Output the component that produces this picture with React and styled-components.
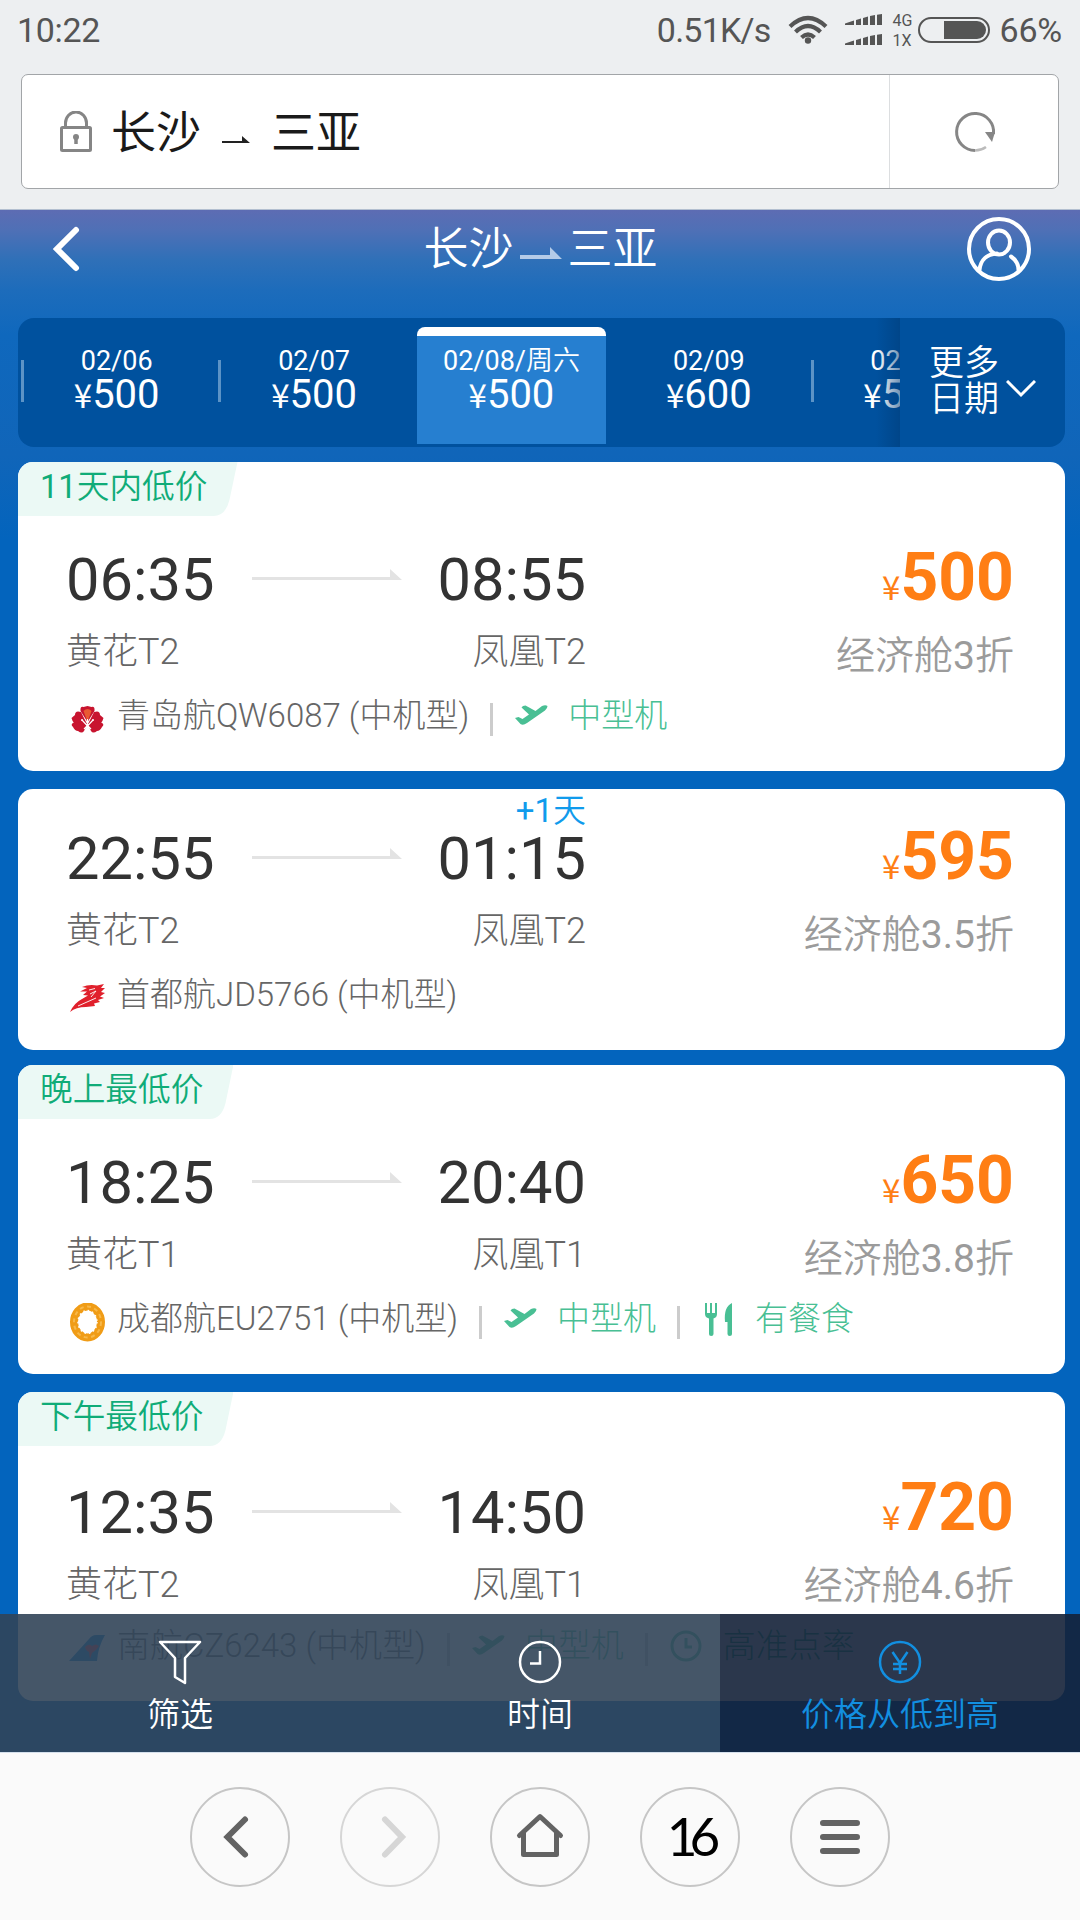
import styled, { createGlobalStyle, css } from 'styled-components';

const GlobalStyle = createGlobalStyle`
  * {
    box-sizing: border-box;
  }

  body {
    margin: 0;
    background-color: #fafafa;
    font-family: Roboto, 'Noto Sans CJK SC', sans-serif;
  }
`;

const Screen = styled.div`
  width: 1080px;
  height: 1920px;
  display: flex;
  flex-direction: column;
  overflow: hidden;
`;

/* status bar + address bar */

const BrowserTop = styled.div`
  height: 210px;
  background-color: #edeff1;
  border-bottom: 1px solid #b3bfd0;
`;

const StatusBar = styled.div`
  height: 74px;
  padding: 10px 18px 0 17px;
  display: flex;
  align-items: flex-start;
  color: #555;
  font-size: 34px;
  line-height: 40px;
`;

const Clock = styled.span`
  flex: 1;
  letter-spacing: -0.3px;
`;

const Speed = styled.span`
  letter-spacing: -0.8px;
  margin-right: 18px;
`;

const Percent = styled.span`
  letter-spacing: -0.2px;
`;

const NetTypes = styled.div`
  width: 26px;
  margin: 1px 0 0 10px;
  font-size: 16px;
  line-height: 20px;
`;

const StatusIcon = styled.svg`
  display: block;
  flex: none;
  margin-right: ${(props) => props.$gap || 0}px;
`;

const AddressBar = styled.div`
  width: 1038px;
  height: 115px;
  margin-left: 21px;
  border: 1px solid #a2a5a8;
  border-radius: 7px;
  background-color: #fff;
  display: flex;
`;

const AddressText = styled.div`
  flex: 1;
  display: flex;
  align-items: center;
  padding-left: 38px;
  color: #1a1a1a;
  font-size: 45px;
  line-height: 60px;

  svg {
    display: block;
  }
`;

const Place = styled.span`
  margin: 4px 0 0 ${(props) => props.$left || 0}px;
`;

const ReloadButton = styled.button`
  width: 169px;
  padding: 0 0 0 2px;
  border: 0;
  border-left: 1px solid #dcdee0;
  background: none;
  display: flex;
  align-items: center;
  justify-content: center;
`;

/* flight page */

const Page = styled.div`
  height: 1542px;
  position: relative;
  background: linear-gradient(
    to bottom,
    #5d6cb3 0,
    #4f70b6 20px,
    #2f70b8 50px,
    #1d6cbb 80px,
    #0f68bd 125px,
    #1065b9 245px,
    #0364bd 330px,
    #0364bd 100%
  );
`;

const Header = styled.header`
  height: 108px;
  padding: 7px 49px 37px 50px;
  display: flex;
  align-items: center;
  justify-content: space-between;
`;

const Title = styled.h1`
  margin: 2px 0 0 32px;
  display: flex;
  align-items: center;
  color: #fff;
  font-size: 45px;
  line-height: 60px;
  font-weight: 350;
`;

const IconButton = styled.button`
  padding: 0;
  border: 0;
  background: none;
  display: flex;
`;

const DateBar = styled.div`
  width: 1047px;
  height: 129px;
  margin: 0 0 15px 18px;
  border-radius: 16px;
  background-color: #00519e;
  display: flex;
  overflow: hidden;
  color: #fff;
`;

const DateScroll = styled.div`
  width: 882px;
  height: 129px;
  display: flex;
  overflow: hidden;
  position: relative;

  &::after {
    content: '';
    position: absolute;
    right: 0;
    top: 0;
    width: 24px;
    height: 129px;
    background: linear-gradient(to right, rgba(0, 60, 120, 0), rgba(0, 60, 120, 0.55));
  }
`;

const DateCell = styled.div`
  flex: none;
  width: 197.4px;
  height: 129px;
  padding: 9px 4px 3px;
  position: relative;

  ${(props) =>
    props.$divider &&
    css`
      &::before {
        content: '';
        position: absolute;
        left: 3px;
        top: 42px;
        width: 3px;
        height: 42px;
        background-color: #5c93c6;
      }
    `}
`;

const DateInner = styled.div`
  height: 117px;
  padding-top: 11px;
  border-top: 9px solid ${(props) => (props.$active ? '#fff' : 'transparent')};
  border-radius: 8px 8px 0 0;
  background-color: ${(props) => (props.$active ? '#267fd0' : 'transparent')};
  text-align: center;
  white-space: nowrap;
`;

const DateLabel = styled.div`
  font-size: 27px;
  line-height: 28px;
`;

const DatePrice = styled.div`
  font-size: 40px;
  line-height: 40px;
`;

const Thin = styled.span`
  font-weight: 350;
`;

const Yuan = styled.span`
  font-family: 'Noto Sans CJK SC', sans-serif;
  font-size: ${(props) => props.$size}px;
  font-weight: 400;
  line-height: 1;
`;

const MoreDates = styled.button`
  flex: 1;
  padding: 0 0 1px 29px;
  border: 0;
  background: none;
  color: #fff;
  font: 350 35px/36px Roboto, 'Noto Sans CJK SC', sans-serif;
  display: flex;
  align-items: center;
  gap: 5px;

  span {
    width: 72px;
    text-align: left;
  }

  svg {
    margin-top: 14px;
  }
`;

const Card = styled.article`
  width: 1047px;
  height: ${(props) => (props.$tagged ? 309 : 261)}px;
  margin: 0 0 ${(props) => props.$gap}px 18px;
  border-radius: 15px;
  background-color: #fff;
  overflow: hidden;
`;

const Tag = styled.div`
  position: relative;
  width: max-content;
  height: 54px;
  padding: 0 30px 0 22px;
  color: #10ac78;
  font-size: 32.7px;
  line-height: 51px;
  z-index: 0;

  svg {
    position: absolute;
    inset: 0;
    z-index: -1;
  }
`;

const Body = styled.div`
  padding: ${(props) => (props.$tagged ? 34 : 40)}px 51px 0 48px;
  display: flex;
  justify-content: space-between;
`;

const Schedule = styled.div`
  width: 520px;
  padding-top: ${(props) => props.$shift || 0}px;
`;

const Row = styled.div`
  display: flex;
  justify-content: space-between;
  align-items: center;
`;

const Time = styled.span`
  position: relative;
  color: #333;
  font-size: 59.6px;
  line-height: 60px;
`;

const NextDay = styled.span`
  position: absolute;
  right: 0;
  top: -38px;
  color: #109bec;
  font-size: 33px;
  font-weight: 400;
  line-height: 40px;
  white-space: nowrap;
`;

const Airports = styled(Row)`
  margin-top: 22px;
  color: #666;
  font-size: 36px;
  font-weight: 300;
  line-height: 40px;
`;

const Fare = styled.div`
  text-align: right;
`;

const Price = styled.div`
  margin-top: -5px;
  color: #ff7e14;
  font-size: 66px;
  font-weight: 700;
  line-height: 66px;
`;

const Discount = styled.div`
  margin-top: 25px;
  color: #9b9b9b;
  font-size: 39px;
  line-height: 40px;
`;

const Airline = styled.div`
  height: 40px;
  margin-top: 20px;
  padding-left: 51px;
  display: flex;
  color: #666;
  font-size: 33px;
  font-weight: 300;
  line-height: 40px;
  white-space: nowrap;

  > svg {
    flex: none;
    margin: 4px 11px 0 0;
  }
`;

const Feature = styled.span`
  display: flex;
  margin-left: 21px;
  color: #49bf94;

  &::before {
    content: '';
    width: 3px;
    height: 33px;
    margin: 7px 21px 0 0;
    background-color: #ccc;
  }

  svg {
    margin: 3px 20px 0 0;
  }
`;

/* floating sort tabs */

const SortBar = styled.div`
  position: absolute;
  left: 0;
  right: 0;
  bottom: 0;
  height: 138px;
  display: flex;
`;

const SortTab = styled.button`
  flex: 1;
  padding: 26px 0 0;
  border: 0;
  background-color: ${(props) =>
    props.$active ? 'rgba(20, 33, 56, 0.9)' : 'rgba(49, 68, 88, 0.9)'};
  color: ${(props) => (props.$active ? '#128fe0' : '#fff')};
  display: flex;
  flex-direction: column;
  align-items: center;
  gap: 9px;
  font: 350 33px/40px Roboto, 'Noto Sans CJK SC', sans-serif;
`;

/* browser toolbar */

const Toolbar = styled.nav`
  height: 168px;
  border-top: 1px solid #d5e0ec;
  background-color: #fafafa;
  padding-top: 34px;
  display: flex;
  justify-content: center;
  gap: 50px;
`;

const ToolButton = styled.button`
  width: 100px;
  height: 100px;
  padding: 0;
  border: 2px solid ${(props) => (props.$disabled ? '#d6d6d6' : '#c6c6c6')};
  border-radius: 50%;
  background: none;
  display: flex;
  align-items: center;
  justify-content: center;
  color: ${(props) => (props.$disabled ? '#d6d6d6' : '#636363')};

  svg {
    flex: none;
  }
`;

const TabCount = styled.span`
  color: #000;
  font-family: Lato, sans-serif;
  font-size: 53px;
  line-height: 60px;
  letter-spacing: -8px;
  margin: 0 1px 3px 0;
`;

const HalfArrow = ({ width, height, margin, fill, thickness, head }) => (
  <svg width={width} height={height} fill={fill} style={{ margin }}>
    <path
      d={`M0 ${height - thickness}H${width - head}V0L${width} ${height}H0z`}
    />
  </svg>
);

const Wifi = () => (
  <StatusIcon width="40" height="40" $gap={17} fill="none" stroke="#555" strokeWidth="4.200">
    <path d="M2 16.500Q20 -0.500 38 16.500M7.500 22Q20 10 32.500 22M13.500 27.500Q20 21.500 26.500 27.500" />
    <circle cx="20" cy="30.500" r="3.200" fill="#555" stroke="none" />
  </StatusIcon>
);

const Signal = () => (
  <StatusIcon width="37" height="40" fill="#555">
    {[4, 24].map((y) => (
      <path
        key={y}
        transform={`translate(0 ${y})`}
        d="M0 11V9.500L9 6.500V11zM11 11V6L16 4.500V11zM18 11V4L23 2.500V11zM25 11V2L30 1V11zM32 11V.700L37 0V11z"
      />
    ))}
  </StatusIcon>
);

const Battery = () => (
  <StatusIcon width="72" height="40" $gap={9}>
    <rect x="1" y="8" width="70" height="24" rx="12" fill="none" stroke="#555" strokeWidth="2" />
    <path d="M26 11H59A9 9 0 0 1 59 29H26z" fill="#555" />
  </StatusIcon>
);

const Lock = () => (
  <svg width="32" height="42" fill="none" stroke="#858585" strokeWidth="3">
    <rect x="1.500" y="16.500" width="29" height="23" rx="1" />
    <path d="M5.500 16V12A10.500 11 0 0 1 26.500 12V16" />
    <circle cx="16" cy="26" r="3" fill="#858585" stroke="none" />
    <path d="M16 26V33" strokeWidth="3.500" />
  </svg>
);

const Reload = () => (
  <svg width="44" height="44" fill="none" stroke="#868686" strokeWidth="3">
    <path d="M40.500 24A18.500 18.500 0 1 0 22 40.500" />
    <path d="M22 40.500Q28 40.500 33 37" stroke="#bbb" strokeWidth="2.500" />
    <path d="M32 22H42L39 32z" fill="#868686" stroke="none" />
  </svg>
);

const User = () => (
  <svg width="64" height="64" fill="none" stroke="#fff" strokeWidth="4">
    <circle cx="32" cy="32" r="30" />
    <ellipse cx="32" cy="25.500" rx="11" ry="12" />
    <path d="M12.500 53C13.500 43 20 37 30 36.500M44 39.500C49 43 51.500 48 51.500 53" strokeLinecap="round" />
  </svg>
);

const Plane = () => (
  <svg width="34" height="34" viewBox="0 0 34 34" fill="currentColor">
    <path d="M1 19L4.500 18L8.500 20L15 15.500L7.500 8.500Q8.500 6.500 11.500 6.500L21.500 12L28 7Q31.500 5.500 33.500 7Q33.500 9.500 31 11.500L13 24Q9 27 6.500 25Z" />
  </svg>
);

const Meal = () => (
  <svg width="34" height="34" viewBox="0 0 34 34" fill="currentColor">
    <path d="M4 1H6V11H9V1H11V11H14V1H16V12Q16 15.500 12.500 16.500V32Q12.500 34 10.200 34T8 32V16.500Q4 15.500 4 12z" />
    <path d="M31 1V32Q31 34 28.800 34T26.500 32V20H24Q22.500 5 31 1z" />
  </svg>
);

const Punctual = () => (
  <svg width="34" height="34" viewBox="0 0 34 34" fill="none" stroke="currentColor" strokeWidth="3">
    <circle cx="17" cy="17" r="14" />
    <path d="M17 9V18H23" />
  </svg>
);

const logos = {
  qingdao: (
    <svg width="37" height="36" viewBox="0 0 37 36">
      <g fill="#c8142f">
        <path d="M18.500 22L11.500 11Q11 6 14.500 7L18.500 6L22.500 7Q26 6 25.500 11Z" />
        <path d="M18 24L12 12Q6 10 6 15L2.500 18Q4 24 9 25Z" />
        <path d="M19 24L25 12Q31 10 31 15L34.500 18Q33 24 28 25Z" />
        <path d="M17.500 23L6 22Q.500 24 4 27Q6 31 9 31Q13 34 15 31L18 25Z" />
        <path d="M19.500 23L31 22Q36.500 24 33 27Q31 31 28 31Q24 34 22 31L19 25Z" />
      </g>
      <path d="M18.500 22L14.500 11Q18.500 7 22.500 11Z" fill="#e85a32" />
      <path d="M18.500 19V26M18.500 26L13 20M18.500 26L24 20M18 26L15 29M19 26L22 29" stroke="#fff" strokeWidth="1.200" fill="none" />
      <circle cx="13" cy="20" r="1" fill="#fff" />
      <circle cx="24" cy="20" r="1" fill="#fff" />
    </svg>
  ),
  capital: (
    <svg width="37" height="36" viewBox="0 0 37 36">
      <path
        d="M1 33Q5 24 13 20L19 16.500L14 16L18 12.500L11 12.500L18 9L13 8Q20 5 28 6.500L35 5L32 9L36 9L32 13L36 14L31 17.500L35 19L29 21L31 23L25 24.500L26 27L17 28Q7 28 1 33z"
        fill="#e0202c"
      />
      <path d="M9 27L27 19M20 11L26 9.500M21 15L27 12L22 18" stroke="#fff" strokeWidth="0.900" fill="none" />
    </svg>
  ),
  chengdu: (
    <svg width="37" height="40" viewBox="0 0 37 40">
      <ellipse cx="18.500" cy="19" rx="13.500" ry="15.500" fill="none" stroke="#f09c16" strokeWidth="8" />
      <ellipse cx="18.500" cy="19" rx="13.500" ry="15.500" fill="none" stroke="#f7b84a" strokeWidth="2" strokeDasharray="4 3.500" />
      <ellipse cx="18.500" cy="19" rx="9.500" ry="11.500" fill="none" stroke="#fff" strokeWidth="1.500" strokeDasharray="1.500 3" />
    </svg>
  ),
  southern: (
    <svg width="37" height="36" viewBox="0 0 37 36">
      <path d="M0 31L20 9Q23 5 27 5H36Q29 17 28 31z" fill="#0a86d8" />
      <path d="M16 17Q20 13 23 16Q27 13 30 16Q27 21 23 23L21 29L20 22Q17 21 16 17z" fill="#e83b4a" />
    </svg>
  ),
};

const features = {
  plane: <Plane />,
  meal: <Meal />,
  punctual: <Punctual />,
};

const dates = [
  { label: '02/06', price: 500, divider: true },
  { label: '02/07', price: 500, divider: true },
  { label: '02/08/', weekday: '周六', price: 500, active: true },
  { label: '02/09', price: 600 },
  { label: '02/10', price: 500, divider: true },
];

const flights = [
  {
    tag: ['11', '天内低价'],
    depart: '06:35',
    arrive: '08:55',
    from: '黄花T2',
    to: '凤凰T2',
    price: 500,
    rate: '3',
    logo: 'qingdao',
    airline: '青岛航QW6087 (中机型)',
    features: [{ icon: 'plane', text: '中型机' }],
    gap: 18,
  },
  {
    depart: '22:55',
    arrive: '01:15',
    nextDay: ['+1', '天'],
    from: '黄花T2',
    to: '凤凰T2',
    price: 595,
    rate: '3.5',
    logo: 'capital',
    airline: '首都航JD5766 (中机型)',
    features: [],
    gap: 15,
  },
  {
    tag: ['', '晚上最低价'],
    depart: '18:25',
    arrive: '20:40',
    from: '黄花T1',
    to: '凤凰T1',
    price: 650,
    rate: '3.8',
    logo: 'chengdu',
    airline: '成都航EU2751 (中机型)',
    features: [
      { icon: 'plane', text: '中型机' },
      { icon: 'meal', text: '有餐食' },
    ],
    gap: 18,
  },
  {
    tag: ['', '下午最低价'],
    depart: '12:35',
    arrive: '14:50',
    from: '黄花T2',
    to: '凤凰T1',
    price: 720,
    rate: '4.6',
    logo: 'southern',
    airline: '南航CZ6243 (中机型)',
    features: [
      { icon: 'plane', text: '中型机' },
      { icon: 'punctual', text: '高准点率' },
    ],
    gap: 0,
    shift: 3,
  },
];

const FlightCard = ({ flight }) => {
  const tagged = Boolean(flight.tag);

  return (
    <Card $tagged={tagged} $gap={flight.gap}>
      {tagged && (
        <Tag>
          <svg width="100%" height="54" viewBox="0 0 218 54" preserveAspectRatio="none">
            <path d="M0 0H218L210 38Q206 54 194 54H0z" fill="#ebf9f5" />
          </svg>
          {flight.tag[0]}
          <Thin>{flight.tag[1]}</Thin>
        </Tag>
      )}
      <Body $tagged={tagged}>
        <Schedule $shift={flight.shift}>
          <Row>
            <Time>{flight.depart}</Time>
            <HalfArrow width={150} height={11} thickness={3} head={12} fill="#e3e3e3" margin="-12px 0 0 2px" />
            <Time>
              {flight.nextDay && (
                <NextDay>
                  {flight.nextDay[0]}
                  <Thin>{flight.nextDay[1]}</Thin>
                </NextDay>
              )}
              {flight.arrive}
            </Time>
          </Row>
          <Airports>
            <span>{flight.from}</span>
            <span>{flight.to}</span>
          </Airports>
        </Schedule>
        <Fare>
          <Price>
            <Yuan $size={33}>¥</Yuan>
            {flight.price}
          </Price>
          <Discount>
            <Thin>经济舱</Thin>
            {flight.rate}
            <Thin>折</Thin>
          </Discount>
        </Fare>
      </Body>
      <Airline>
        {logos[flight.logo]}
        {flight.airline}
        {flight.features.map(({ icon, text }) => (
          <Feature key={icon}>
            {features[icon]}
            {text}
          </Feature>
        ))}
      </Airline>
    </Card>
  );
};

const App = () => (
  <Screen>
    <GlobalStyle />
    <BrowserTop>
      <StatusBar>
        <Clock>10:22</Clock>
        <Speed>0.51K/s</Speed>
        <Wifi />
        <Signal />
        <NetTypes>
          <div>4G</div>
          <div>1X</div>
        </NetTypes>
        <Battery />
        <Percent>66%</Percent>
      </StatusBar>
      <AddressBar>
        <AddressText>
          <Lock />
          <Place $left={19}>长沙</Place>
          <HalfArrow width={28} height={7} thickness={2} head={8} fill="#222" margin="15px 21px 0" />
          <Place>三亚</Place>
        </AddressText>
        <ReloadButton>
          <Reload />
        </ReloadButton>
      </AddressBar>
    </BrowserTop>

    <Page>
      <Header>
        <IconButton>
          <svg width="32" height="50" fill="none" stroke="#fff" strokeWidth="6" strokeLinecap="round">
            <path d="M26 6L7 25L26 44" />
          </svg>
        </IconButton>
        <Title>
          长沙
          <HalfArrow width={42} height={12} thickness={4} head={12} fill="#b4cbe8" margin="6px 6px 0" />
          三亚
        </Title>
        <IconButton>
          <User />
        </IconButton>
      </Header>

      <DateBar>
        <DateScroll>
          {dates.map((date) => (
            <DateCell key={date.label} $divider={date.divider}>
              <DateInner $active={date.active}>
                <DateLabel>
                  {date.label}
                  {date.weekday && <Thin>{date.weekday}</Thin>}
                </DateLabel>
                <DatePrice>
                  <Yuan $size={33}>¥</Yuan>
                  {date.price}
                </DatePrice>
              </DateInner>
            </DateCell>
          ))}
        </DateScroll>
        <MoreDates>
          <span>更多日期</span>
          <svg width="30" height="18" fill="none" stroke="#fff" strokeWidth="3">
            <path d="M1 1L15 15L29 1" />
          </svg>
        </MoreDates>
      </DateBar>

      {flights.map((flight) => (
        <FlightCard key={flight.depart} flight={flight} />
      ))}

      <SortBar>
        <SortTab>
          <svg width="44" height="46" fill="none" stroke="#fff" strokeWidth="2.500" strokeLinejoin="round">
            <path d="M2 2H42L27 18V43L17 37V18z" />
          </svg>
          筛选
        </SortTab>
        <SortTab>
          <svg width="44" height="46" fill="none" stroke="#fff" strokeWidth="2.500">
            <circle cx="22" cy="22" r="20" />
            <path d="M22 11V23.500H12" />
          </svg>
          时间
        </SortTab>
        <SortTab $active>
          <svg width="44" height="46" fill="none" stroke="#128fe0" strokeWidth="2.500">
            <circle cx="22" cy="22" r="20" />
            <path d="M14.500 12L22 23L29.500 12M22 23V34M15 24H29M15 29H29" />
          </svg>
          价格从低到高
        </SortTab>
      </SortBar>
    </Page>

    <Toolbar>
      <ToolButton>
        <svg width="100" height="100" fill="none" stroke="currentColor" strokeWidth="6" strokeLinecap="round">
          <path d="M55 32.500L37.500 50L55 67.500" />
        </svg>
      </ToolButton>
      <ToolButton $disabled>
        <svg width="100" height="100" fill="none" stroke="currentColor" strokeWidth="6" strokeLinecap="round">
          <path d="M45 32.500L62 50L45 67.500" />
        </svg>
      </ToolButton>
      <ToolButton>
        <svg width="100" height="100" fill="none" stroke="currentColor" strokeWidth="5" strokeLinecap="round" strokeLinejoin="round">
          <path d="M29.500 48.500L50 29.500L70.500 48.500M33.500 46V67.500H66.500V46" />
        </svg>
      </ToolButton>
      <ToolButton>
        <TabCount>16</TabCount>
      </ToolButton>
      <ToolButton>
        <svg width="100" height="100" stroke="currentColor" strokeWidth="6" strokeLinecap="round">
          <path d="M33 36H67M33 50H67M33 64H67" />
        </svg>
      </ToolButton>
    </Toolbar>
  </Screen>
);

export default App;
